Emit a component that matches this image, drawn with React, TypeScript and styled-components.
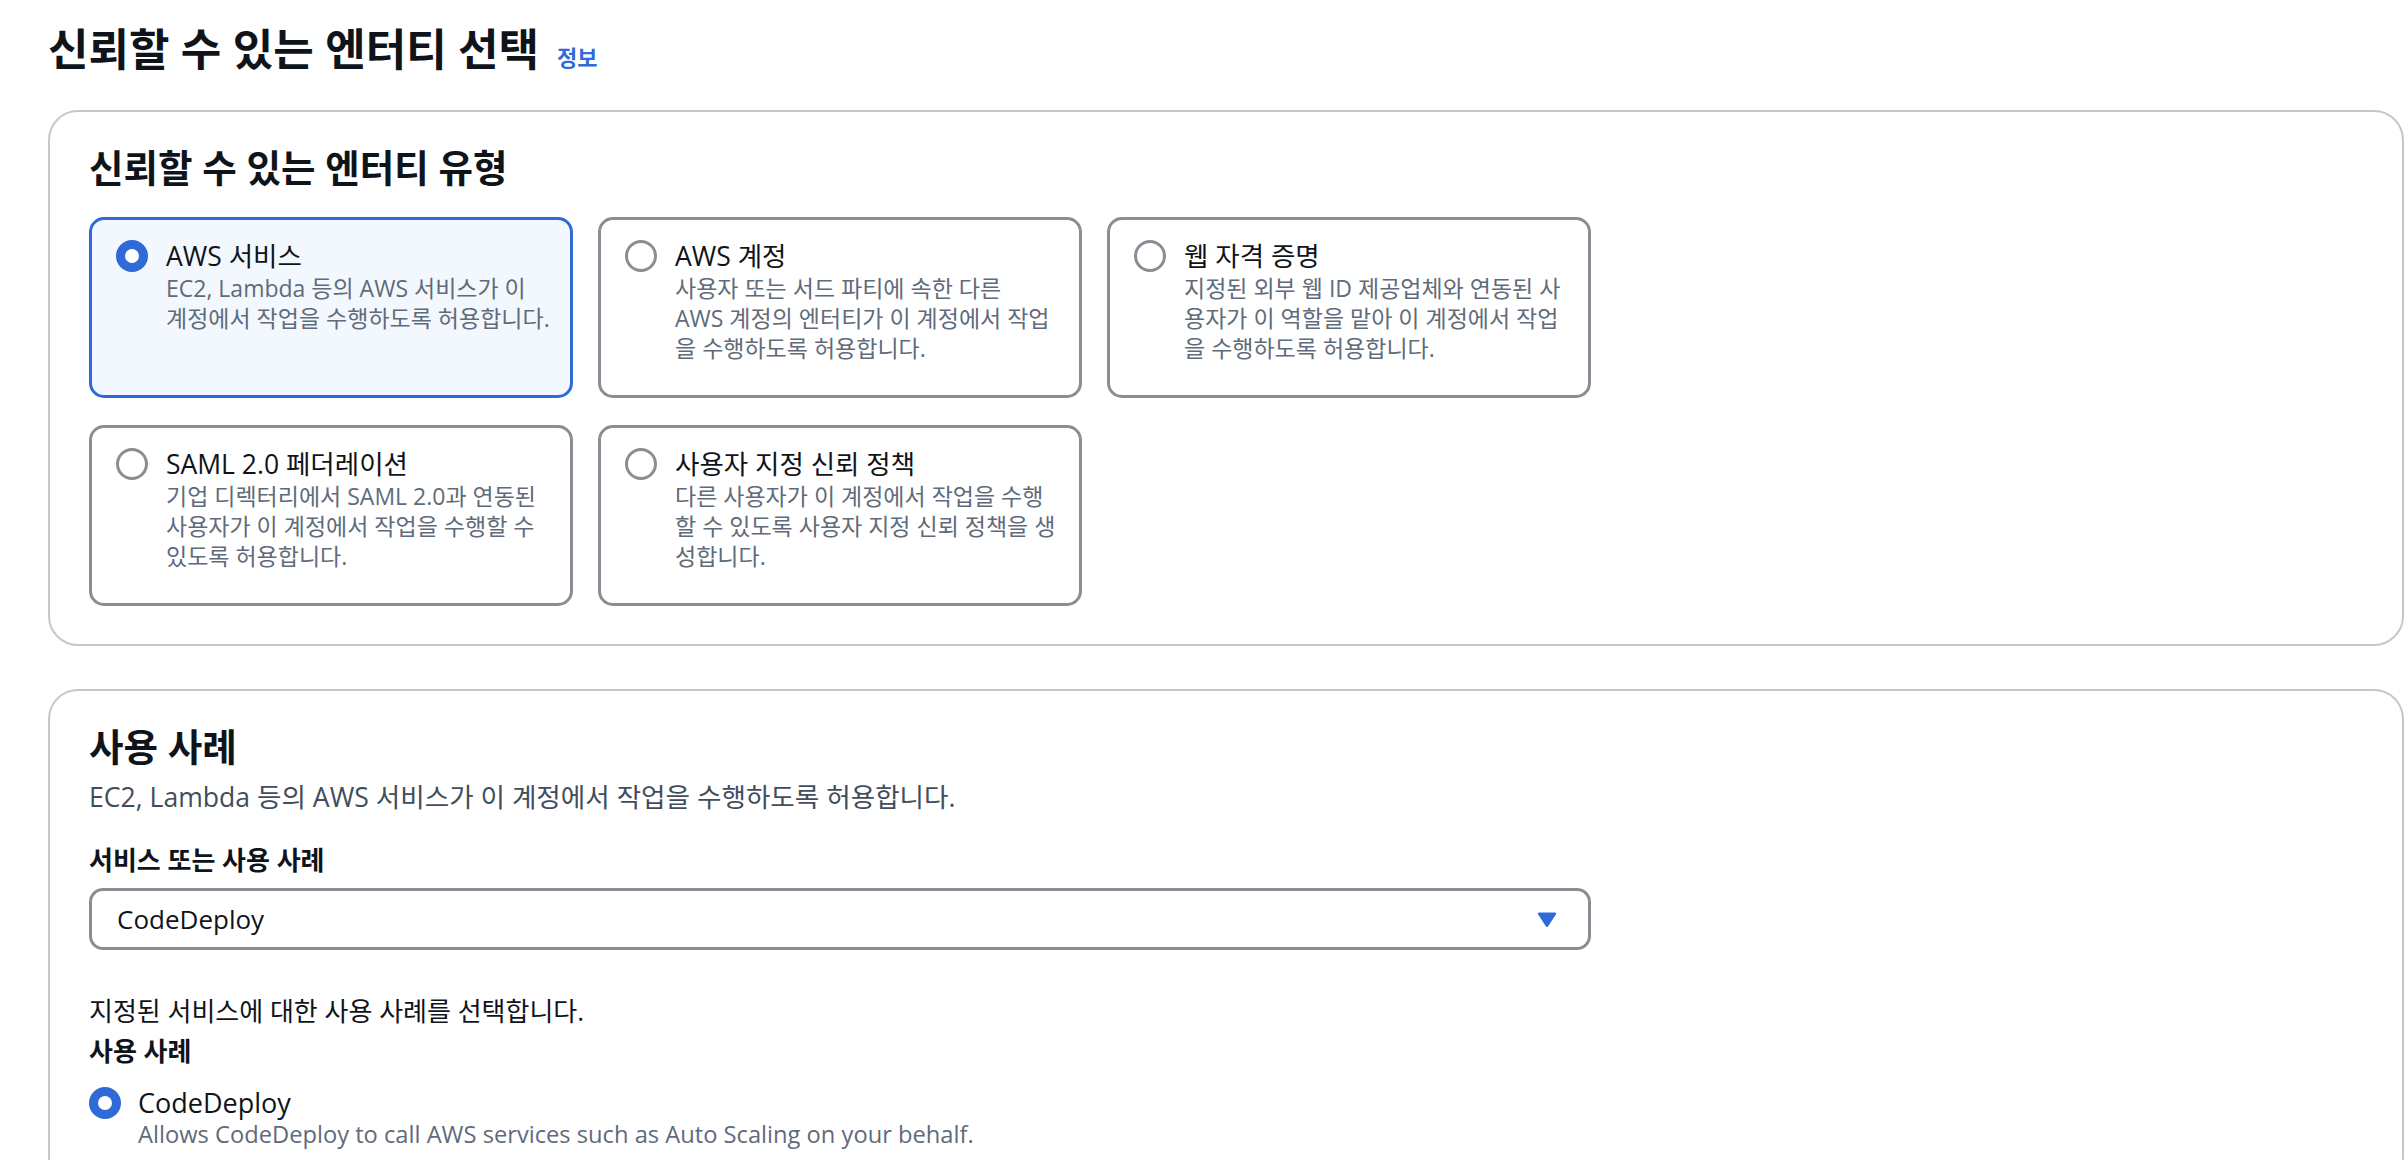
import styled, { createGlobalStyle } from 'styled-components';

const GlobalStyle = createGlobalStyle`
  body {
    margin: 0;
    background: #ffffff;
    font-family: "Open Sans", "Noto Sans CJK KR", sans-serif;
    color: #0f141a;
  }
`;

const Page = styled.div`
  display: flex;
  flex-direction: column;
  padding: 19px 4px 40px 48px;
`;

const TitleRow = styled.div`
  display: flex;
  align-items: baseline;
  margin-bottom: 31px;
`;

const Title = styled.h1`
  margin: 0;
  font-size: 44px;
  line-height: 60px;
  font-weight: 700;
  color: #0f141a;
`;

const InfoLink = styled.a`
  margin-left: 18px;
  font-size: 22px;
  font-weight: 700;
  color: #2f6ad8;
  text-decoration: none;
`;

const Container = styled.section`
  border: 2px solid #c6c6cd;
  border-radius: 30px;
  padding: 32px 40px 38px 39px;

  & + & {
    margin-top: 43px;
  }
`;

const Heading = styled.h2`
  margin: 0;
  font-size: 37.5px;
  line-height: 48px;
  font-weight: 700;
  color: #0f141a;
`;

const TileGrid = styled.div`
  display: grid;
  grid-template-columns: repeat(3, 484px);
  gap: 27px 25px;
  margin-top: 25px;
`;

const Tile = styled.div<{ $selected?: boolean }>`
  box-sizing: border-box;
  display: flex;
  align-items: flex-start;
  gap: 18px;
  padding: 19px 20px 32px 24px;
  border: 3px solid ${({ $selected }) => ($selected ? '#2f6ad8' : '#8c8c94')};
  border-radius: 15px;
  background: ${({ $selected }) => ($selected ? '#f2f8fd' : '#ffffff')};
`;

const Radio = styled.span<{ $checked?: boolean }>`
  flex: none;
  box-sizing: border-box;
  width: 32px;
  height: 32px;
  margin-top: 1px;
  border-radius: 50%;
  background: #ffffff;
  border: ${({ $checked }) => ($checked ? '9px solid #2f6ad8' : '3px solid #8c8c94')};
`;

const TileBody = styled.div`
  display: flex;
  flex-direction: column;
`;

const TileLabel = styled.span`
  font-size: 26.5px;
  line-height: 34px;
  color: #0f141a;
`;

const TileDesc = styled.span`
  font-size: 23px;
  line-height: 30px;
  color: #5f6b7a;
  white-space: nowrap;
`;

const HeaderDesc = styled.p`
  margin: 11px 0 0;
  font-size: 26.6px;
  line-height: 30px;
  color: #414d5c;
`;

const FieldLabel = styled.div<{ $gap: number }>`
  margin-top: ${({ $gap }) => $gap}px;
  font-size: 26px;
  line-height: 30px;
  font-weight: 700;
  color: #0f141a;
`;

const Select = styled.div`
  box-sizing: border-box;
  display: flex;
  align-items: center;
  justify-content: space-between;
  width: 1502px;
  height: 62px;
  margin-top: 13px;
  padding: 0 31px 0 25px;
  border: 3px solid #8c8c94;
  border-radius: 14px;
  font-size: 26px;
  color: #0f141a;
`;

const Hint = styled.p`
  margin: 46px 0 0;
  font-size: 26px;
  line-height: 30px;
  color: #0f141a;
`;

const OptionRow = styled.div`
  display: flex;
  align-items: center;
  gap: 17px;
  margin-top: 20px;
`;

const OptionLabel = styled.span`
  font-size: 27px;
  line-height: 30px;
  color: #0f141a;
`;

const OptionDesc = styled.div`
  margin-left: 49px;
  font-size: 23.7px;
  line-height: 30px;
  color: #5f6b7a;
`;

const tiles = [
  {
    label: 'AWS 서비스',
    lines: ['EC2, Lambda 등의 AWS 서비스가 이', '계정에서 작업을 수행하도록 허용합니다.'],
    selected: true,
  },
  {
    label: 'AWS 계정',
    lines: ['사용자 또는 서드 파티에 속한 다른', 'AWS 계정의 엔터티가 이 계정에서 작업', '을 수행하도록 허용합니다.'],
  },
  {
    label: '웹 자격 증명',
    lines: ['지정된 외부 웹 ID 제공업체와 연동된 사', '용자가 이 역할을 맡아 이 계정에서 작업', '을 수행하도록 허용합니다.'],
  },
  {
    label: 'SAML 2.0 페더레이션',
    lines: ['기업 디렉터리에서 SAML 2.0과 연동된', '사용자가 이 계정에서 작업을 수행할 수', '있도록 허용합니다.'],
  },
  {
    label: '사용자 지정 신뢰 정책',
    lines: ['다른 사용자가 이 계정에서 작업을 수행', '할 수 있도록 사용자 지정 신뢰 정책을 생', '성합니다.'],
  },
];

function CaretDown() {
  return (
    <svg width="20" height="17" viewBox="0 0 20 17">
      <path
        d="M2 1.5 H18 a1.2 1.2 0 0 1 1 1.8 L11.2 15.3 a1.4 1.4 0 0 1 -2.4 0 L1 3.3 A1.2 1.2 0 0 1 2 1.5 Z"
        fill="#2f6ad8"
      />
    </svg>
  );
}

export default function App() {
  return (
    <>
      <GlobalStyle />
      <Page>
        <TitleRow>
          <Title>신뢰할 수 있는 엔터티 선택</Title>
          <InfoLink href="#">정보</InfoLink>
        </TitleRow>

        <Container>
          <Heading>신뢰할 수 있는 엔터티 유형</Heading>
          <TileGrid>
            {tiles.map((tile) => (
              <Tile key={tile.label} $selected={tile.selected}>
                <Radio $checked={tile.selected} />
                <TileBody>
                  <TileLabel>{tile.label}</TileLabel>
                  {tile.lines.map((line) => (
                    <TileDesc key={line}>{line}</TileDesc>
                  ))}
                </TileBody>
              </Tile>
            ))}
          </TileGrid>
        </Container>

        <Container>
          <Heading>사용 사례</Heading>
          <HeaderDesc>EC2, Lambda 등의 AWS 서비스가 이 계정에서 작업을 수행하도록 허용합니다.</HeaderDesc>
          <FieldLabel $gap={33}>서비스 또는 사용 사례</FieldLabel>
          <Select>
            <span>CodeDeploy</span>
            <CaretDown />
          </Select>
          <Hint>지정된 서비스에 대한 사용 사례를 선택합니다.</Hint>
          <FieldLabel $gap={10}>사용 사례</FieldLabel>
          <OptionRow>
            <Radio $checked />
            <OptionLabel>CodeDeploy</OptionLabel>
          </OptionRow>
          <OptionDesc>Allows CodeDeploy to call AWS services such as Auto Scaling on your behalf.</OptionDesc>
        </Container>
      </Page>
    </>
  );
}
